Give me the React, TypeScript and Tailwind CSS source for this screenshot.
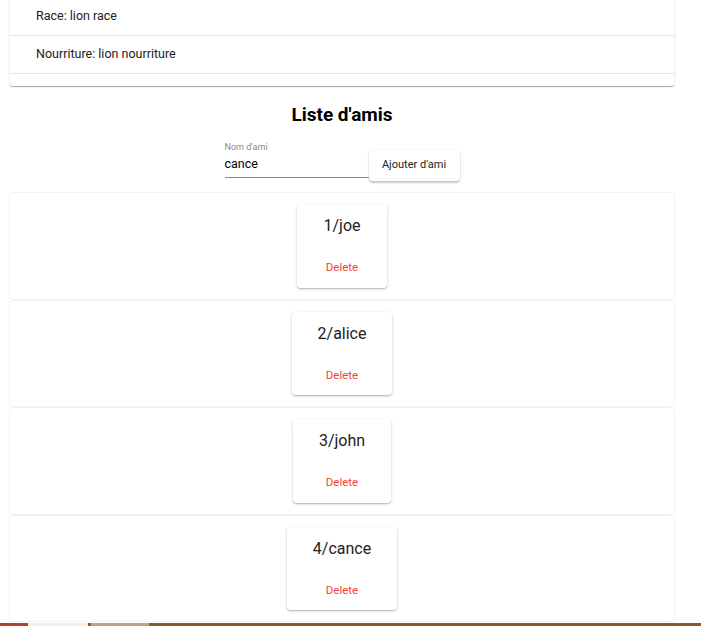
import React from 'react';

// ============================================================================
// Friend list page (lion profile + friends)
// ============================================================================

const friends = [
  { id: 1, name: 'joe' },
  { id: 2, name: 'alice' },
  { id: 3, name: 'john' },
  { id: 4, name: 'cance' },
];

function InfoRow({ label }: { label: string }) {
  return (
    <div className="h-[38px] flex items-center pl-[26px] border-b border-[#e6e6e6] text-[12.5px] text-[#222]">
      {label}
    </div>
  );
}

function FriendCard({ id, name }: { id: number; name: string }) {
  return (
    <div className="border border-[#f2f2f2] rounded-[4px] bg-white flex justify-center py-[11px] h-[107.5px]">
      <div className="rounded-[4px] bg-white shadow-[0_1px_3px_rgba(0,0,0,0.2),0_1px_1px_rgba(0,0,0,0.14)] px-[26px] pt-[10px] flex flex-col items-center">
        <div className="text-[16px] leading-[24px] text-[#222]">
          {id}/{name}
        </div>
        <button className="mt-[19px] text-[11.5px] leading-[20px] text-[#f44336]">Delete</button>
      </div>
    </div>
  );
}

export default function App() {
  return (
    <div className="relative w-[701px] h-[626px] overflow-hidden bg-white" style={{ fontFamily: 'Roboto, "Liberation Sans", sans-serif' }}>
      <div className="px-[9px] w-[684px]">
        {/* Lion info card (scrolled) */}
        <div className="-mt-[2px] bg-white rounded-b-[4px] border-x border-[#f0f0f0] shadow-[0_2px_1px_-1px_rgba(0,0,0,0.25),0_1px_1px_rgba(0,0,0,0.14)]">
          <InfoRow label="Race: lion race" />
          <InfoRow label="Nourriture: lion nourriture" />
          <div className="h-[12px]" />
        </div>

        {/* Friends heading */}
        <h2 className="mt-[17px] text-center text-[19px] font-bold leading-[24px] text-black">Liste d'amis</h2>

        {/* Add friend form */}
        <div className="mt-[14px] flex justify-center items-end">
          <div className="w-[144px] border-b border-[#8a8a8a]">
            <div className="text-[9px] leading-[12px] text-[#888]">Nom d'ami</div>
            <div className="text-[12.5px] leading-[22px] text-black pb-[2px]">cance</div>
          </div>
          <button className="w-[91px] h-[31px] rounded-[4px] bg-white text-[11px] text-[#222] shadow-[0_2px_2px_rgba(0,0,0,0.2),0_0_2px_rgba(0,0,0,0.12)] mb-[-3px]">
            Ajouter d'ami
          </button>
        </div>

        {/* Friend cards */}
        <div className="mt-[14px] flex flex-col">
          {friends.map((f) => (
            <FriendCard key={f.id} id={f.id} name={f.name} />
          ))}
        </div>
      </div>

      {/* Taskbar strip */}
      <div className="absolute left-0 right-0 bottom-0 h-[3px] bg-[#8a5a2e] flex">
        <div className="w-[27px] bg-[#b0432c]" />
        <div className="w-[60px] ml-[1px] bg-[#f4efe8]" />
        <div className="w-[58px] ml-[3px] bg-[#b9a48c]" />
      </div>
    </div>
  );
}
